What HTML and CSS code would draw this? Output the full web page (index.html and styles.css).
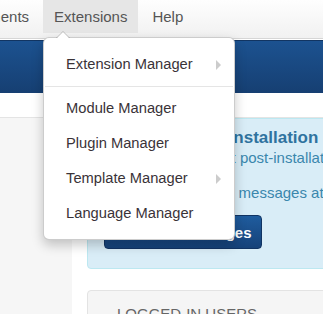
FILE: index.html
```html
<!DOCTYPE html>
<html lang="en">
<head>
    <meta charset="UTF-8">
    <meta name="viewport" content="width=device-width, initial-scale=1.0">
    <title>Control Panel - Administration</title>
    <link rel="stylesheet" href="styles.css">
</head>
<body>

    <header class="navbar">
        <ul class="nav">
            <li><a href="#">Components</a></li>
            <li class="dropdown open">
                <a href="#">Extensions</a>
                <ul class="dropdown-menu">
                    <li class="submenu"><a href="#">Extension Manager</a></li>
                    <li class="divider"></li>
                    <li><a href="#">Module Manager</a></li>
                    <li><a href="#">Plugin Manager</a></li>
                    <li class="submenu"><a href="#">Template Manager</a></li>
                    <li><a href="#">Language Manager</a></li>
                </ul>
            </li>
            <li><a href="#">Help</a></li>
        </ul>
    </header>

    <div class="subhead"></div>
    <div class="spacer"></div>

    <div class="main">
        <div class="sidebar"></div>
        <div class="content">
            <div class="alert">
                <h4>You have post-installation messages</h4>
                <p class="first">There are important post-installation messages that require your attention.</p>
                <p>You can hide all the messages at any time.</p>
                <a class="btn" href="#">
                    <svg width="16" height="16" viewBox="0 0 16 16"><path d="M1 8c2-3.5 4.5-5 7-5s5 1.5 7 5c-2 3.5-4.5 5-7 5S3 11.5 1 8z" fill="none" stroke="#fff" stroke-width="1.5"/><circle cx="8" cy="8" r="2.2" fill="#fff"/></svg>
                    Read Messages
                </a>
            </div>

            <div class="well">
                <h2>Logged-in Users</h2>
            </div>
        </div>
    </div>

</body>
</html>
```

FILE: styles.css
```css
body {
    margin: 0;
    font-family: "Liberation Sans", Arial, sans-serif;
    background: #fff;
    overflow: hidden;
}
ul {
    list-style: none;
    margin: 0;
    padding: 0;
}
a {
    text-decoration: none;
}

/* top navbar */
.navbar {
    height: 38px;
    background: linear-gradient(#fefefe, #f1f1f1);
    border-bottom: 1px solid #d6d6d6;
}
.nav {
    display: flex;
    gap: 3px;
    margin-left: -67px;
}
.nav > li {
    position: relative;
}
.nav > li > a {
    display: block;
    padding: 0 11px;
    line-height: 33px;
    font-size: 15px;
    color: #555;
}
.nav > li.open > a {
    background: #e6e6e6;
}

/* dropdown */
.dropdown-menu {
    position: absolute;
    top: 37px;
    left: 0;
    width: 190px;
    padding: 9px 0 8px;
    background: #fff;
    border: 1px solid rgba(0, 0, 0, 0.2);
    border-radius: 6px;
    box-shadow: 0 5px 12px rgba(0, 0, 0, 0.22);
    z-index: 10;
}
.dropdown-menu:before,
.dropdown-menu:after {
    content: "";
    position: absolute;
    border-style: solid;
    border-color: transparent;
}
.dropdown-menu:before {
    left: 12px;
    top: -7px;
    border-width: 0 7px 7px;
    border-bottom-color: rgba(0, 0, 0, 0.2);
}
.dropdown-menu:after {
    left: 13px;
    top: -6px;
    border-width: 0 6px 6px;
    border-bottom-color: #fff;
}
.dropdown-menu li a {
    display: block;
    position: relative;
    padding: 0 22px;
    line-height: 35px;
    font-size: 14.7px;
    color: #3a3338;
}
.dropdown-menu .submenu a:after {
    content: "";
    position: absolute;
    right: 13px;
    top: 13px;
    border-style: solid;
    border-color: transparent;
    border-width: 5px 0 5px 5px;
    border-left-color: #ccc;
}
.dropdown-menu .divider {
    height: 1px;
    margin: 4px 1px;
    background: #e5e5e5;
}

/* blue title bar */
.subhead {
    height: 52px;
    margin-top: 1px;
    background: linear-gradient(#1c5290, #163f72);
    border-top: 1px solid #123562;
}
.spacer {
    height: 24px;
}

/* page body */
.main {
    display: flex;
    border-top: 1px solid #e4e4e4;
    min-height: 200px;
}
.sidebar {
    width: 72px;
    flex-shrink: 0;
    background: #f6f6f6;
}
.content {
    flex: 1;
    padding-left: 15px;
    overflow: hidden;
}
.alert {
    width: 560px;
    padding: 8px 16px 19px;
    background: #d9edf7;
    border: 1px solid #bce8f1;
    border-radius: 4px;
    color: #3a87ad;
}
.alert h4 {
    margin: 0;
    text-indent: 4px;
    font-size: 17px;
    line-height: 22px;
    color: #2f739f;
}
.alert p {
    margin: 0 0 13px;
    font-size: 15px;
    line-height: 18px;
}
.alert p.first {
    margin-bottom: 17px;
}
.btn {
    display: inline-flex;
    align-items: center;
    gap: 8px;
    height: 32px;
    padding: 0 9px 0 10px;
    background: linear-gradient(#1f5c9e, #164279);
    border: 1px solid #113463;
    border-radius: 4px;
    color: #fff;
    font-size: 15px;
    font-weight: bold;
}
.well {
    width: 560px;
    margin-top: 21px;
    padding: 14px 29px;
    background: #f5f5f5;
    border: 1px solid #e3e3e3;
    border-radius: 4px;
}
.well h2 {
    margin: 0;
    font-size: 15px;
    font-weight: normal;
    text-transform: uppercase;
    color: #666;
}
```
